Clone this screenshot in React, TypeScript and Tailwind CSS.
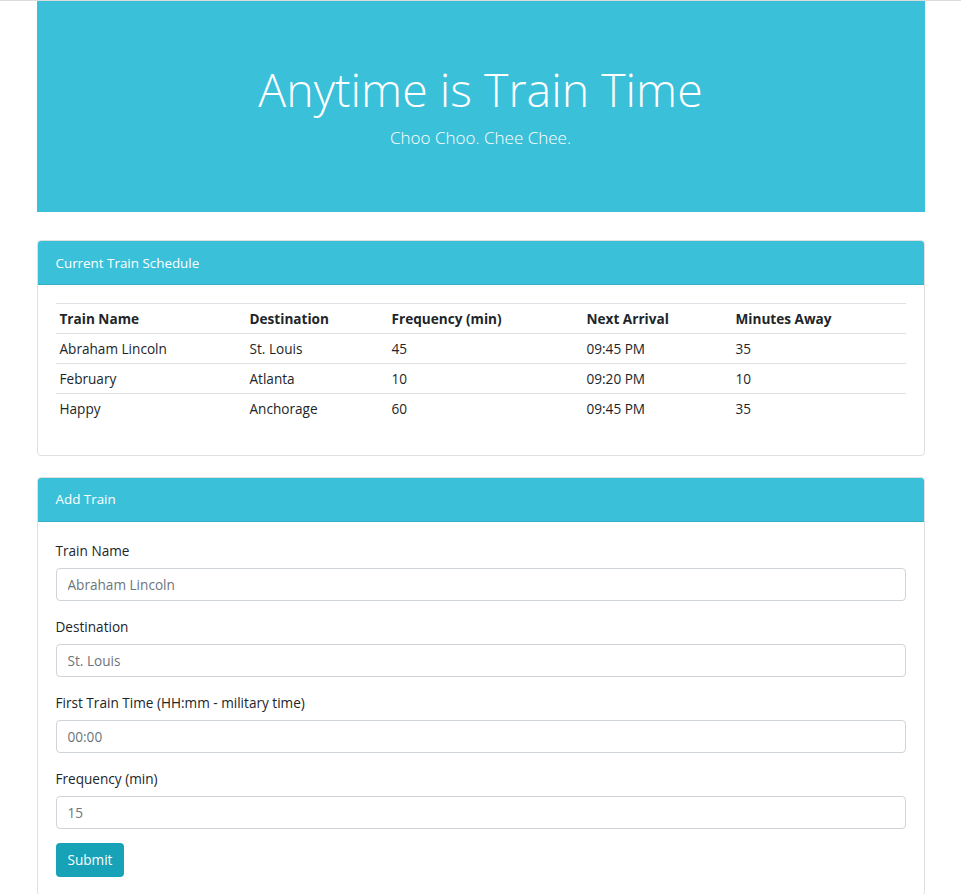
import React from "react";

const trains = [
    { name: "Abraham Lincoln", dest: "St. Louis", freq: "45", next: "09:45 PM", away: "35" },
    { name: "February", dest: "Atlanta", freq: "10", next: "09:20 PM", away: "10" },
    { name: "Happy", dest: "Anchorage", freq: "60", next: "09:45 PM", away: "35" },
]

const fields = [
    { label: "Train Name", placeholder: "Abraham Lincoln" },
    { label: "Destination", placeholder: "St. Louis" },
    { label: "First Train Time (HH:mm - military time)", placeholder: "00:00" },
    { label: "Frequency (min)", placeholder: "15" },
]

export default function App() {
    return (
        <div className="min-h-[894px] bg-white text-[#212529] text-[13.6px] leading-[21.6px]" style={{ fontFamily: '"Open Sans", "Noto Sans", sans-serif' }}>
            <div className="h-px bg-[#dcdcdc]" />
            <div className="w-[888px] mx-auto">
                <div className="bg-[#3bc0da] text-white text-center h-[211px] pt-[58px]">
                    <h1 className="text-[46.5px] leading-[60px] font-light">Anytime is Train Time</h1>
                    <p className="mt-[5px] text-[17px] leading-[27px] font-light">Choo Choo. Chee Chee.</p>
                </div>

                <div className="mt-[28px] border border-[#dfdfdf] rounded-[4px] overflow-hidden">
                    <div className="bg-[#3bc0da] text-white text-[13.4px] h-[44px] pt-[2px] px-[18px] flex items-center border-b border-[#35aec6]">
                        Current Train Schedule
                    </div>
                    <div className="px-[18px] pt-[18px] pb-[31px]">
                        <table className="w-full table-fixed border-collapse">
                            <colgroup>
                                <col className="w-[190px]" />
                                <col className="w-[142px]" />
                                <col className="w-[195px]" />
                                <col className="w-[149px]" />
                                <col />
                            </colgroup>
                            <thead>
                                <tr className="border-t border-b border-[#dee2e6] h-[30px]">
                                    <th className="text-left font-bold px-[4px]">Train Name</th>
                                    <th className="text-left font-bold px-[4px]">Destination</th>
                                    <th className="text-left font-bold px-[4px]">Frequency (min)</th>
                                    <th className="text-left font-bold px-[4px]">Next Arrival</th>
                                    <th className="text-left font-bold px-[4px]">Minutes Away</th>
                                </tr>
                            </thead>
                            <tbody>
                                {trains.map((t, idx) => (
                                    <tr key={idx} className={`h-[30px] ${idx < trains.length - 1 ? "border-b border-[#dee2e6]" : ""}`}>
                                        <td className="px-[4px]">{t.name}</td>
                                        <td className="px-[4px]">{t.dest}</td>
                                        <td className="px-[4px]">{t.freq}</td>
                                        <td className="px-[4px]">{t.next}</td>
                                        <td className="px-[4px]">{t.away}</td>
                                    </tr>
                                ))}
                            </tbody>
                        </table>
                    </div>
                </div>

                <div className="mt-[21px] border border-[#dfdfdf] rounded-[4px] overflow-hidden">
                    <div className="bg-[#3bc0da] text-white text-[13.4px] h-[44px] pt-[2px] px-[18px] flex items-center border-b border-[#35aec6]">
                        Add Train
                    </div>
                    <div className="px-[18px] pt-[17px] pb-[18px]">
                        {fields.map((f) => (
                            <div key={f.label} className="mb-[14px]">
                                <label className="block leading-[22px] mb-[7px] pt-[1px]">{f.label}</label>
                                <input
                                    type="text"
                                    placeholder={f.placeholder}
                                    className="block w-full h-[33px] -mt-[1px] border border-[#ced4da] rounded-[4px] px-[11px] text-[13.6px] placeholder:text-[#6c757d] outline-none"
                                />
                            </div>
                        ))}
                        <button className="h-[34px] px-[12px] rounded-[4px] bg-[#17a2b8] text-white">Submit</button>
                    </div>
                </div>
            </div>
        </div>
    )
}
